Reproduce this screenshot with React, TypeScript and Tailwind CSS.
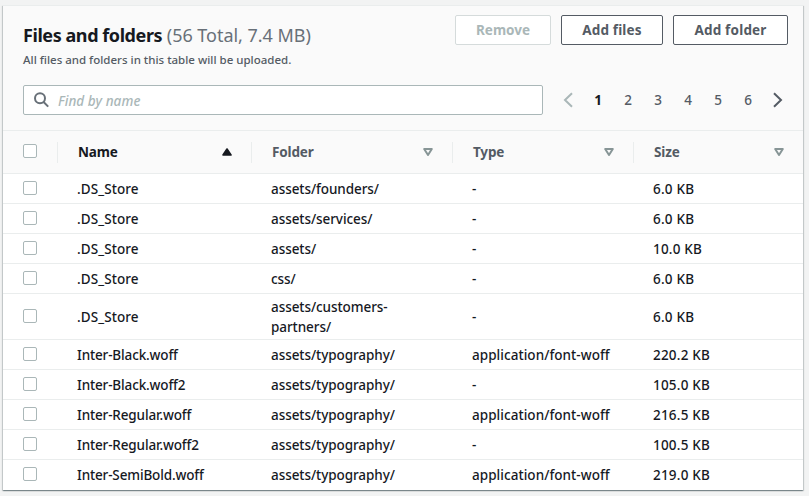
type Row = { name: string; folder: string; type: string; size: string; tall?: boolean };

const rows: Row[] = [
  { name: '.DS_Store', folder: 'assets/founders/', type: '-', size: '6.0 KB' },
  { name: '.DS_Store', folder: 'assets/services/', type: '-', size: '6.0 KB' },
  { name: '.DS_Store', folder: 'assets/', type: '-', size: '10.0 KB' },
  { name: '.DS_Store', folder: 'css/', type: '-', size: '6.0 KB' },
  { name: '.DS_Store', folder: 'assets/customers-partners/', type: '-', size: '6.0 KB', tall: true },
  { name: 'Inter-Black.woff', folder: 'assets/typography/', type: 'application/font-woff', size: '220.2 KB' },
  { name: 'Inter-Black.woff2', folder: 'assets/typography/', type: '-', size: '105.0 KB' },
  { name: 'Inter-Regular.woff', folder: 'assets/typography/', type: 'application/font-woff', size: '216.5 KB' },
  { name: 'Inter-Regular.woff2', folder: 'assets/typography/', type: '-', size: '100.5 KB' },
  { name: 'Inter-SemiBold.woff', folder: 'assets/typography/', type: 'application/font-woff', size: '219.0 KB' },
];

function Checkbox() {
  return <span className="block size-[14px] shrink-0 rounded-[2px] border border-[#aab7b8] bg-white" />;
}

function SortIcon({ active }: { active?: boolean }) {
  return active ? (
    <svg width="10" height="8" viewBox="0 0 10 8" className="shrink-0">
      <path d="M5 1 9 7H1Z" fill="#16191f" stroke="#16191f" strokeWidth="1.6" strokeLinejoin="round" />
    </svg>
  ) : (
    <svg width="10" height="8" viewBox="0 0 10 8" className="shrink-0">
      <path d="M1.2 1H8.8L5 7Z" fill="none" stroke="#879596" strokeWidth="2" strokeLinejoin="round" />
    </svg>
  );
}

function HeaderCell({ label, active, width }: { label: string; active?: boolean; width: string }) {
  return (
    <div className={`flex h-[21px] items-center justify-between border-l border-[#eaeded] pr-[19px] pl-5 ${width}`}>
      <span className={`font-bold tracking-[-0.15px] ${active ? 'text-[#16191f]' : 'text-[#545b64]'}`}>{label}</span>
      <SortIcon active={active} />
    </div>
  );
}

function Arrow({ flip, color }: { flip?: boolean; color: string }) {
  return (
    <svg width="10" height="16" viewBox="0 0 10 16" fill="none" stroke={color} strokeWidth="2" className="shrink-0">
      <path d={flip ? 'M1 1.2 8 8 1 14.8' : 'M9 1.2 2 8 9 14.8'} />
    </svg>
  );
}

export default function App() {
  return (
    <div className="h-[496px] w-[809px] overflow-hidden bg-[#f2f3f3] pt-[5px] pl-[3px] font-['Noto_Sans',sans-serif] text-[13.5px] leading-5 text-[#16191f]">
      <div className="w-[800px] border-t border-[#eaeded] bg-white shadow-[0_1px_1px_0_rgba(0,28,36,0.3),1px_1px_1px_0_rgba(0,28,36,0.15),-1px_1px_1px_0_rgba(0,28,36,0.15)]">
        <div className="h-[125px] border-b border-[#eaeded] bg-[#fafafa] pr-[15px] pl-5">
          <div className="flex h-[79px] justify-between">
            <div className="pt-[17px]">
              <h2 className="text-[18px] leading-6 whitespace-nowrap">
                <span className="font-bold tracking-[-0.43px]">Files and folders</span>{' '}
                <span className="tracking-[-0.03px] text-[#687078]">(56 Total, 7.4 MB)</span>
              </h2>
              <p className="mt-[4px] text-[11.5px] leading-[18px] font-medium whitespace-nowrap text-[#545b64]">
                All files and folders in this table will be uploaded.
              </p>
            </div>
            <div className="flex gap-[10px] pt-[9px] font-bold text-[#545b64]">
              <button className="h-[30px] w-[96px] rounded-[2px] border border-[#d5dbdb] bg-white text-[#aab7b8]">Remove</button>
              <button className="h-[30px] w-[102px] rounded-[2px] border border-[#545b64] bg-white tracking-[0.15px]">Add files</button>
              <button className="h-[30px] w-[115px] rounded-[2px] border border-[#545b64] bg-white tracking-[0.2px]">Add folder</button>
            </div>
          </div>
          <div className="flex items-center">
            <div className="flex h-[30px] w-[520px] items-center rounded-[2px] border border-[#aab7b8] bg-white pl-[10px]">
              <svg width="16" height="16" viewBox="0 0 16 16" fill="none" stroke="#687078" strokeWidth="2">
                <circle cx="6" cy="6.3" r="5" />
                <path d="m9.6 10 4.6 4.6" />
              </svg>
              <span className="mt-[2px] ml-2 font-medium tracking-[0.05px] text-[#aab7b8] italic">Find by name</span>
            </div>
            <div className="ml-[20px] flex items-center text-[#545b64]">
              <Arrow color="#aab7b8" />
              <div className="ml-[10px] flex font-medium">
                {[1, 2, 3, 4, 5, 6].map((n) => (
                  <span key={n} className={`w-[30px] text-center ${n === 1 ? 'font-bold text-[#16191f]' : ''}`}>{n}</span>
                ))}
              </div>
              <span className="ml-[10px]"><Arrow flip color="#545b64" /></span>
            </div>
          </div>
        </div>
        <div className="flex h-[43px] items-center border-b border-[#eaeded] bg-[#fafafa] pl-5">
          <div className="w-[34px] pb-[2px]"><Checkbox /></div>
          <HeaderCell label="Name" active width="w-[194px]" />
          <HeaderCell label="Folder" width="w-[201px]" />
          <HeaderCell label="Type" width="w-[181px]" />
          <HeaderCell label="Size" width="w-[170px]" />
        </div>
        {rows.map((r, i) => (
          <div
            key={i}
            className={`flex items-center border-[#eaeded] pl-5 font-medium ${r.tall ? 'h-[46px]' : 'h-[30px]'} ${i < rows.length - 1 ? 'border-b' : ''}`}
          >
            <div className="w-[54px] pb-[2px]"><Checkbox /></div>
            <div className={`w-[194px] ${r.name === '.DS_Store' ? 'tracking-[0.08px]' : 'tracking-[-0.14px]'}`}>{r.name}</div>
            <div className="w-[201px] pr-[60px] tracking-[-0.07px]">{r.folder}</div>
            <div className="w-[181px] tracking-[0.05px]">{r.type}</div>
            <div className="tracking-[0.2px]">{r.size}</div>
          </div>
        ))}
      </div>
    </div>
  );
}
